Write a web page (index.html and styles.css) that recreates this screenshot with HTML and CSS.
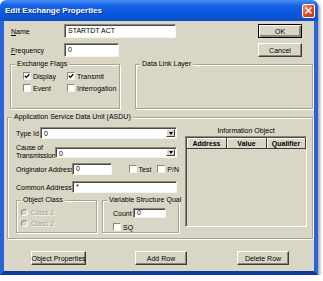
FILE: index.html
```html
<!DOCTYPE html>
<html lang="en">
<head>
    <meta charset="UTF-8">
    <title>Edit Exchange Properties</title>
    <link rel="stylesheet" href="styles.css">
</head>
<body>
    <div class="window">
        <div class="titlebar">
            <span class="title">Edit Exchange Properties</span>
            <span class="close">
                <svg width="9" height="9" viewBox="0 0 9 9"><path d="M1.5 1.5 L7.5 7.5 M7.5 1.5 L1.5 7.5" stroke="#fff" stroke-width="1.6"/></svg>
            </span>
        </div>
        <div class="frame">
            <div class="row">
                <span class="lbl-top"><u>N</u>ame</span>
                <span class="field w-name">STARTDT ACT</span>
                <button class="btn btn-default push">OK</button>
            </div>
            <div class="row">
                <span class="lbl-top"><u>F</u>requency</span>
                <span class="field w-freq">0</span>
                <button class="btn push">Cancel</button>
            </div>

            <div class="groups">
                <div class="group flags">
                    <span class="group-title">Exchange Flags</span>
                    <div class="flag-grid">
                        <span class="cb-item"><span class="cb"><svg width="6" height="6" viewBox="0 0 6 6"><path d="M0.8 2.8 L2.4 4.4 L5.3 1.2" fill="none" stroke="#000" stroke-width="1.3"/></svg></span>Display</span>
                        <span class="cb-item"><span class="cb"><svg width="6" height="6" viewBox="0 0 6 6"><path d="M0.8 2.8 L2.4 4.4 L5.3 1.2" fill="none" stroke="#000" stroke-width="1.3"/></svg></span>Transmit</span>
                        <span class="cb-item"><span class="cb"></span>Event</span>
                        <span class="cb-item"><span class="cb"></span>Interrogation</span>
                    </div>
                </div>
                <div class="group datalink">
                    <span class="group-title">Data Link Layer</span>
                </div>
            </div>

            <div class="group asdu">
                <span class="group-title">Application Service Data Unit (ASDU)</span>
                <div class="asdu-body">
                    <div class="asdu-left">
                        <div class="arow r-type">
                            <span class="l-type">Type Id</span>
                            <span class="select w-type"><span class="select-text">0</span><span class="select-btn"></span></span>
                        </div>
                        <div class="arow r-cause">
                            <span class="l-cause">Cause of<br>Transmission</span>
                            <span class="select w-cause"><span class="select-text">0</span><span class="select-btn"></span></span>
                        </div>
                        <div class="arow r-orig">
                            <span class="l-addr">Originator Address</span>
                            <span class="field w-orig">0</span>
                            <span class="cb-item test"><span class="cb"></span>Test</span>
                            <span class="cb-item"><span class="cb"></span>P/N</span>
                        </div>
                        <div class="arow r-common">
                            <span class="l-addr">Common Address</span>
                            <span class="field w-common">*</span>
                        </div>
                        <div class="subgroups">
                            <div class="group objclass">
                                <span class="group-title">Object Class</span>
                                <div class="radios">
                                    <span class="radio-item"><span class="radio"></span>Class 1</span>
                                    <span class="radio-item"><span class="radio"></span>Class 2</span>
                                </div>
                            </div>
                            <div class="group varqual">
                                <span class="group-title">Variable Structure Qual</span>
                                <div class="count-row">
                                    <span class="l-count">Count</span>
                                    <span class="field w-count">0</span>
                                </div>
                                <span class="cb-item sq"><span class="cb"></span>SQ</span>
                            </div>
                        </div>
                    </div>
                    <div class="asdu-right">
                        <div class="info-title">Information Object</div>
                        <div class="list">
                            <div class="list-head">
                                <span>Address</span>
                                <span>Value</span>
                                <span>Qualifier</span>
                            </div>
                        </div>
                    </div>
                </div>
            </div>

            <div class="actions">
                <button class="btn b-props">Object Properties</button>
                <button class="btn b-add">Add Row</button>
                <button class="btn b-del">Delete Row</button>
            </div>
        </div>
    </div>
</body>
</html>
```

FILE: styles.css
```css
*{
    box-sizing: border-box;
}
body{
    margin: 0px;
    padding: 0px;
    background-color: #fff;
    font-family: "Liberation Sans", Arial, sans-serif;
    font-size: 7px;
    color: #000;
}
.window{
    width: 318px;
    height: 275px;
    display: flex;
    flex-direction: column;
    border-radius: 6px 6px 0 0;
    box-shadow: 2px 2px 3px rgba(0, 0, 0, 0.35);
}
.titlebar{
    height: 21px;
    flex: none;
    display: flex;
    align-items: center;
    padding: 0 3px 0 5px;
    border-radius: 6px 6px 0 0;
    background: linear-gradient(#4a90f4, #1764e4 25%, #0a58de 60%, #0c4fc8);
    color: #fff;
    font-weight: bold;
    font-size: 8px;
}
.title{
    flex: 1;
    text-shadow: 1px 1px #0b2f8f;
}
.close{
    width: 13px;
    height: 14px;
    border: 1px solid #fff;
    border-radius: 2px;
    background: linear-gradient(135deg, #f29273, #de4a22 55%, #c23a16);
    display: flex;
    align-items: center;
    justify-content: center;
}
.frame{
    flex: 1;
    background-color: #dad6c6;
    border: 4px solid #2a62d8;
    border-top: 0;
    border-bottom-color: #12389e;
    padding-top: 3px;
}

/* fields and buttons */
.field{
    display: block;
    height: 14px;
    background-color: #fff;
    border: 1px solid;
    border-color: #8c8877 #f6f5ef #f6f5ef #8c8877;
    box-shadow: inset 1px 1px #4a4a44;
    padding: 0 0 0 3px;
    line-height: 12px;
    white-space: nowrap;
}
.btn{
    height: 14px;
    padding: 0;
    border: 1px solid;
    border-color: #fff #3c3c3c #3c3c3c #fff;
    box-shadow: inset -1px -1px #8a8676;
    background-color: #dad6c6;
    font: inherit;
    color: #000;
    white-space: nowrap;
    display: flex;
    align-items: center;
    justify-content: center;
}
.btn-default{
    border-color: #000;
    box-shadow: inset 1px 1px #fff, inset -2px -2px #8a8676;
}
.push{
    width: 44px;
    margin-left: auto;
    margin-right: 12px;
}
.select{
    display: flex;
    background-color: #fff;
    border: 1px solid;
    border-color: #8c8877 #f6f5ef #f6f5ef #8c8877;
    box-shadow: inset 1px 1px #4a4a44;
    padding: 1px 1px 1px 1px;
}
.select-text{
    flex: 1;
    padding-left: 2px;
    line-height: 9px;
}
.select-btn{
    width: 9px;
    border: 1px solid;
    border-color: #fff #3c3c3c #3c3c3c #fff;
    background-color: #dad6c6;
    display: flex;
    align-items: center;
    justify-content: center;
}
.select-btn::after{
    content: "";
    border-left: 2.5px solid transparent;
    border-right: 2.5px solid transparent;
    border-top: 3px solid #000;
}
.cb-item{
    display: flex;
    align-items: center;
    gap: 2px;
    height: 8px;
    white-space: nowrap;
}
.cb{
    width: 8px;
    height: 8px;
    flex: none;
    background-color: #fff;
    border: 1px solid;
    border-color: #8c8877 #f6f5ef #f6f5ef #8c8877;
    display: flex;
    align-items: center;
    justify-content: center;
}

/* top rows */
.row{
    display: flex;
    align-items: center;
    height: 14px;
    margin-left: 7px;
}
.row + .row{
    margin-top: 5px;
}
.lbl-top{
    width: 53px;
}
.w-name{
    width: 112px;
}
.w-freq{
    width: 55px;
}

/* group boxes */
.group{
    border: 1px solid #a9a593;
    box-shadow: inset 1px 1px #fff, 1px 1px #fff;
}
.group-title{
    display: block;
    width: max-content;
    margin: -5px 0 -3px 4px;
    padding: 0 2px;
    background-color: #dad6c6;
    line-height: 8px;
}
.groups{
    display: flex;
    margin: 7px 0 0 6px;
}
.flags{
    width: 110px;
    height: 45px;
}
.flag-grid{
    display: grid;
    grid-template-columns: 44px auto;
    row-gap: 4px;
    padding: 7px 0 0 12px;
}
.datalink{
    width: 178px;
    height: 45px;
    margin-left: 15px;
}

/* ASDU */
.asdu{
    width: 306px;
    height: 122px;
    margin: 8px 0 0 3px;
}
.asdu-body{
    display: flex;
    padding-left: 8px;
}
.asdu-left{
    width: 163px;
}
.arow{
    display: flex;
    align-items: center;
}
.r-type{
    height: 12px;
    margin-top: 9px;
}
.l-type{
    width: 24px;
}
.w-type{
    width: 137px;
    height: 12px;
}
.r-cause{
    height: 16px;
    margin-top: 5px;
}
.l-cause{
    width: 39px;
    flex: none;
    line-height: 8px;
    white-space: nowrap;
    letter-spacing: -0.15px;
}
.w-cause{
    width: 122px;
    height: 11px;
}
.r-orig{
    height: 12px;
    margin-top: 3px;
}
.l-addr{
    width: 56px;
    white-space: nowrap;
}
.w-orig{
    width: 41px;
    height: 12px;
    line-height: 10px;
}
.test{
    width: 30px;
    margin-left: 17px;
}
.r-common{
    height: 12px;
    margin-top: 6px;
}
.w-common{
    width: 105px;
    height: 12px;
    line-height: 10px;
}
.subgroups{
    display: flex;
    gap: 5px;
    margin-top: 7px;
}
.objclass{
    width: 81px;
    height: 33px;
}
.radios{
    display: flex;
    flex-direction: column;
    gap: 4px;
    padding: 8px 0 0 4px;
}
.radio-item{
    display: flex;
    align-items: center;
    gap: 3px;
    height: 7px;
    color: #a19d8d;
    text-shadow: 1px 1px #fff;
}
.radio{
    width: 7px;
    height: 7px;
    border-radius: 50%;
    border: 1px solid;
    border-color: #8c8877 #fff #fff #8c8877;
}
.varqual{
    width: 77px;
    height: 33px;
}
.count-row{
    display: flex;
    align-items: center;
    height: 10px;
    margin: 7px 0 0 10px;
}
.l-count{
    width: 20px;
}
.w-count{
    width: 33px;
    height: 10px;
    line-height: 8px;
}
.sq{
    margin: 5px 0 0 10px;
}
.asdu-right{
    width: 122px;
    margin-left: 6px;
}
.info-title{
    margin-top: 9px;
    text-align: center;
    line-height: 8px;
}
.list{
    height: 91px;
    margin-top: 1px;
    border: 1px solid;
    border-color: #8c8877 #fff #fff #8c8877;
    box-shadow: inset 1px 1px #4a4a44;
    padding: 1px 0 0 1px;
}
.list-head{
    display: grid;
    grid-template-columns: 40px 40px 1fr;
    height: 11px;
    font-weight: bold;
}
.list-head span{
    display: flex;
    align-items: center;
    justify-content: center;
    border-right: 1px solid #3c3c3c;
    border-bottom: 1px solid #3c3c3c;
    box-shadow: inset 1px 1px #fff;
}

/* bottom buttons */
.actions{
    display: flex;
    margin-top: 12px;
}
.b-props{
    width: 55px;
    margin-left: 27px;
}
.b-add{
    width: 52px;
    margin-left: 49px;
}
.b-del{
    width: 52px;
    margin-left: 50px;
}
```
